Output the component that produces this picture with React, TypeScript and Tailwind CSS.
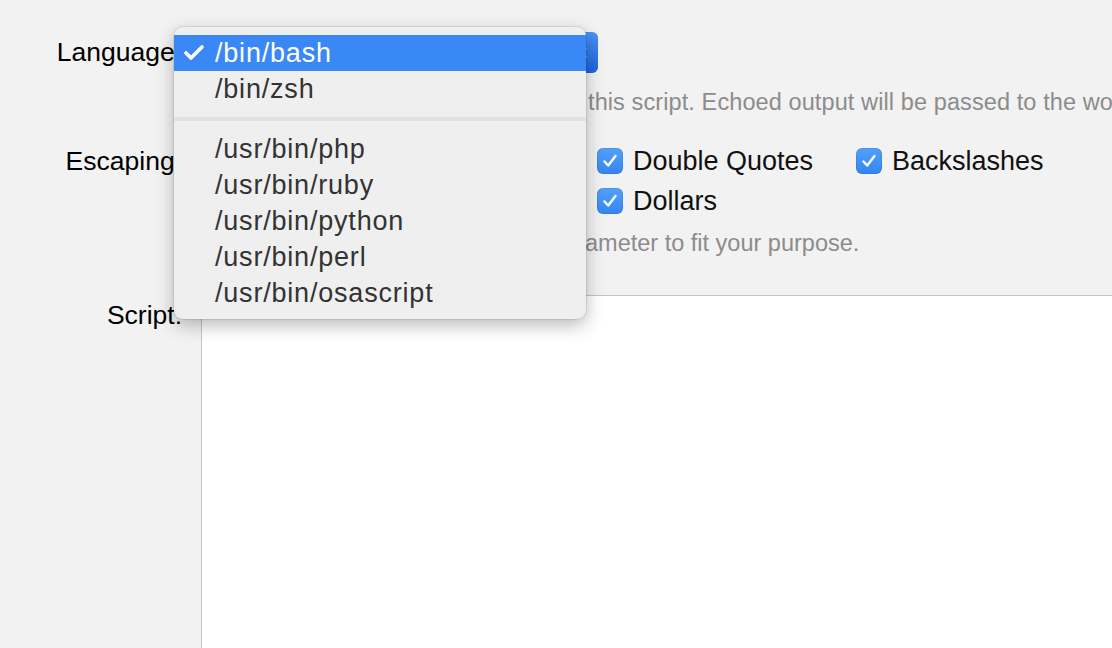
import { Check } from "lucide-react";

const menuItems = [
  ["/bin/bash", "/bin/zsh"],
  ["/usr/bin/php", "/usr/bin/ruby", "/usr/bin/python", "/usr/bin/perl", "/usr/bin/osascript"],
];

// the first two columns sit under the open menu
const escapes = [
  { label: "", checked: true },
  { label: "", checked: true },
  { label: "Double Quotes", checked: true },
  { label: "Backslashes", checked: true },
  { label: "", checked: false },
  { label: "", checked: true },
  { label: "Dollars", checked: true },
];

const Checkbox = ({ label, checked }: { label: string; checked: boolean }) => (
  <label className="flex items-center gap-[10px] h-[26px]">
    <span
      className={`w-[26px] h-[26px] rounded-[6px] flex items-center justify-center shrink-0 ${
        checked
          ? "bg-gradient-to-b from-[#52a0f9] to-[#3585f3] shadow-[inset_0_0_0_1px_rgba(0,0,0,0.08)]"
          : "bg-white border border-[#b9b9b9]"
      }`}
    >
      {checked && (
        <svg width="20" height="20" viewBox="0 0 20 20" fill="none">
          <path d="M4.5 10.5 L8.2 14.5 L15.5 5" stroke="white" strokeWidth="2.4" strokeLinecap="round" strokeLinejoin="round" />
        </svg>
      )}
    </span>
    {label && <span className="text-[27px] leading-none text-[#111]">{label}</span>}
  </label>
);

const PopupMenu = () => (
  <div className="absolute left-[174px] top-[27px] w-[412px] rounded-[9px] bg-[#efefef] py-[8px] shadow-[0_6px_18px_rgba(0,0,0,0.28),0_0_0_1px_rgba(0,0,0,0.08)] z-10">
    {menuItems.map((group, gi) => (
      <div key={gi}>
        {gi > 0 && (
          <div className="h-[24px] flex items-center">
            <div className="h-[4px] w-full bg-[#e1e1e1]" />
          </div>
        )}
        {group.map((item) => {
          const selected = item === "/bin/bash";
          return (
            <div
              key={item}
              className={`relative h-[36px] flex items-center pl-[41px] text-[27px] tracking-[0.8px] ${
                selected ? "bg-[#3a88f6] text-white" : "text-[#333]"
              }`}
            >
              {selected && (
                <Check className="absolute left-[8px] top-[6px] w-[24px] h-[24px]" strokeWidth={3.6} />
              )}
              {item}
            </div>
          );
        })}
      </div>
    ))}
  </div>
);

export default function App() {
  return (
    <div
      className="relative h-screen overflow-hidden bg-[#f2f2f2] flex flex-col pt-[32px] whitespace-nowrap"
      style={{ fontFamily: '"Liberation Sans", Arial, sans-serif' }}
    >
      <div className="grid grid-cols-[182px_1fr] gap-x-[19px]">
        {/* Language */}
        <div className="text-right text-[26.5px] text-black h-[41px] flex items-center justify-end">Language:</div>
        <div>
          <div className="relative w-[397px] h-[41px] rounded-[6px] bg-white border border-[#c6c6c6]">
            <div className="absolute right-[-1px] top-[-1px] bottom-[-1px] w-[32px] rounded-r-[6px] bg-gradient-to-b from-[#4a93f7] to-[#1c63dc] flex flex-col items-center justify-center gap-[5px]">
              <svg width="10" height="7" viewBox="0 0 10 7"><path d="M1 6 L5 2 L9 6" stroke="white" strokeWidth="2" fill="none" /></svg>
              <svg width="10" height="7" viewBox="0 0 10 7"><path d="M1 1 L5 5 L9 1" stroke="white" strokeWidth="2" fill="none" /></svg>
            </div>
          </div>
          <div className="mt-[17px] flex text-[23.5px] tracking-[0.1px] leading-[24px] text-[#8c8c8c]">
            <div className="w-[387px] shrink-0" />
            <span>this script. Echoed output will be passed to the workflow.</span>
          </div>
        </div>

        {/* Escaping */}
        <div className="mt-[35px] text-right text-[26.5px] text-black h-[26px] flex items-center justify-end">Escaping:</div>
        <div className="mt-[34px]">
          <div className="grid grid-cols-[198px_198px_259px_auto] gap-y-[14px]">
            {escapes.map((e, i) => (
              <Checkbox key={i} label={e.label} checked={e.checked} />
            ))}
          </div>
          <div className="mt-[17px] flex text-[23.5px] leading-[24px] text-[#8c8c8c]">
            <div className="w-[384px] shrink-0" />
            <span>ameter to fit your purpose.</span>
          </div>
        </div>
      </div>

      {/* Script */}
      <div className="mt-[40px] flex-1 grid grid-cols-[182px_1fr] gap-x-[19px]">
        <div className="pt-[5px] text-right text-[26.5px] text-black leading-[30px]">Script:</div>
        <div className="bg-white border-l border-t border-[#c4c4c4]" />
      </div>

      <PopupMenu />
    </div>
  );
}
